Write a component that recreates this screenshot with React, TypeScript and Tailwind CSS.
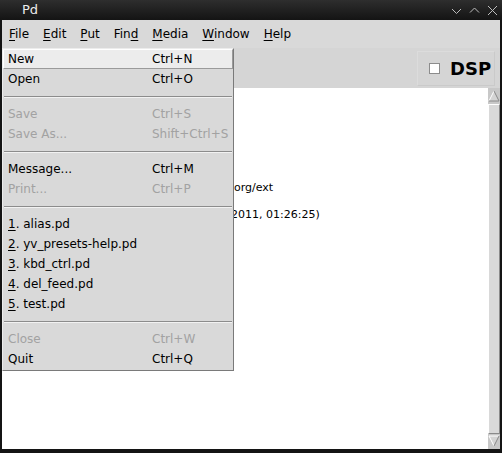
import React from 'react';

type Item =
  | { kind: 'item'; label: React.ReactNode; shortcut?: string; disabled?: boolean; active?: boolean }
  | { kind: 'sep' };

const font = { fontFamily: '"DejaVu Sans", "Liberation Sans", sans-serif' };

const U = ({ children }: { children: React.ReactNode }) => <span className="underline underline-offset-[2px]">{children}</span>;

const menuBar: { pre?: string; u: string; post: string }[] = [
  { u: 'F', post: 'ile' },
  { u: 'E', post: 'dit' },
  { u: 'P', post: 'ut' },
  { pre: 'Fin', u: 'd', post: '' },
  { u: 'M', post: 'edia' },
  { u: 'W', post: 'indow' },
  { u: 'H', post: 'elp' },
];

const fileMenu: Item[] = [
  { kind: 'item', label: 'New', shortcut: 'Ctrl+N', active: true },
  { kind: 'item', label: 'Open', shortcut: 'Ctrl+O' },
  { kind: 'sep' },
  { kind: 'item', label: 'Save', shortcut: 'Ctrl+S', disabled: true },
  { kind: 'item', label: 'Save As...', shortcut: 'Shift+Ctrl+S', disabled: true },
  { kind: 'sep' },
  { kind: 'item', label: 'Message...', shortcut: 'Ctrl+M' },
  { kind: 'item', label: 'Print...', shortcut: 'Ctrl+P', disabled: true },
  { kind: 'sep' },
  { kind: 'item', label: <><U>1</U>. alias.pd</> },
  { kind: 'item', label: <><U>2</U>. yv_presets-help.pd</> },
  { kind: 'item', label: <><U>3</U>. kbd_ctrl.pd</> },
  { kind: 'item', label: <><U>4</U>. del_feed.pd</> },
  { kind: 'item', label: <><U>5</U>. test.pd</> },
  { kind: 'sep' },
  { kind: 'item', label: 'Close', shortcut: 'Ctrl+W', disabled: true },
  { kind: 'item', label: 'Quit', shortcut: 'Ctrl+Q' },
];

const Arrow = ({ up }: { up?: boolean }) => (
  <svg width="12" height="12" viewBox="0 0 12 12" className="block">
    {up ? (
      <>
        <polygon points="6,1 11,11 1,11" fill="#d4d4d4" />
        <polyline points="1,11 6,1" fill="none" stroke="#ffffff" strokeWidth="1" />
        <polyline points="6,1 11,11 1,11" fill="none" stroke="#8a8a8a" strokeWidth="1" />
      </>
    ) : (
      <>
        <polygon points="1,1 11,1 6,11" fill="#d4d4d4" />
        <polyline points="6,11 1,1 11,1" fill="none" stroke="#ffffff" strokeWidth="1" />
        <polyline points="11,1 6,11" fill="none" stroke="#8a8a8a" strokeWidth="1" />
      </>
    )}
  </svg>
);

export default function App() {
  return (
    <div className="relative w-[502px] h-[453px] overflow-hidden bg-[#141414] flex flex-col" style={font}>
      {/* title bar */}
      <div className="h-[20px] flex items-center bg-gradient-to-b from-[#2e2e2e] to-[#141414] text-[#ececec] text-[13px]">
        <span className="ml-[22px]">Pd</span>
        <div className="ml-auto flex items-center gap-[7px] mr-[4px]">
          <svg width="11" height="11" viewBox="0 0 11 11"><polyline points="1,4 5.5,8.5 10,4" fill="none" stroke="#bdbdbd" strokeWidth="1" /></svg>
          <svg width="11" height="11" viewBox="0 0 11 11"><polyline points="1,7.5 5.5,3 10,7.5" fill="none" stroke="#bdbdbd" strokeWidth="1" /></svg>
          <svg width="11" height="11" viewBox="0 0 11 11"><path d="M1 1 L10 10 M10 1 L1 10" fill="none" stroke="#bdbdbd" strokeWidth="1" /></svg>
        </div>
      </div>

      <div className="flex-1 flex flex-col px-[2px] pb-[4px]">
        {/* menu bar */}
        <div className="h-[28px] bg-[#d9d9d9] flex items-center text-[12px] text-black">
          {menuBar.map((m, i) => (
            <span key={i} className="px-[7px]">
              {m.pre}
              <U>{m.u}</U>
              {m.post}
            </span>
          ))}
        </div>

        {/* toolbar */}
        <div className="h-[40px] bg-[#d5d5d5] flex items-center justify-end pr-[5px]">
          <div className="h-[35px] w-[78px] flex items-center border border-[#dcdcdc] border-b-[#cacaca] border-r-[#cacaca]">
            <span className="ml-[11px] w-[11px] h-[11px] bg-white border border-[#8c8c8c]" />
            <span className="ml-[10px] text-[18px] font-bold text-black leading-none mt-[1px]">DSP</span>
          </div>
        </div>

        {/* console (the start of each line lies under the open menu) */}
        <div className="flex-1 flex bg-white">
          <div className="flex-1 text-[11px] text-black leading-[13px] whitespace-nowrap overflow-hidden pt-[93px]">
            <div className="pl-[232px]">org/ext</div>
            <div className="pl-[229px] mt-[14px]">2011, 01:26:25)</div>
          </div>
          <div className="w-[12px] flex flex-col bg-[#c8c8c8] py-[2px]">
            <Arrow up />
            <div className="flex-1 mt-[2px] mb-[1px] bg-[#d9d9d9] border border-t-white border-l-white border-r-[#8a8a8a] border-b-[#8a8a8a]" />
            <Arrow />
          </div>
        </div>
      </div>

      {/* File menu dropdown */}
      <div className="absolute left-[2px] top-[48px] w-[232px] bg-[#d9d9d9] border border-[#ececec] border-r-[#7a7a7a] border-b-[#7a7a7a] text-[12px] pb-[1px]">
        {fileMenu.map((it, i) =>
          it.kind === 'sep' ? (
            <div key={i} className="h-[15px] flex items-center px-[1px]">
              <div className="w-full h-[2px] border-t border-[#8c8c8c] border-b border-b-[#f2f2f2]" />
            </div>
          ) : (
            <div
              key={i}
              className={`h-[20px] flex items-center ${
                it.active ? 'bg-[#ececec] border border-t-white border-l-white border-r-[#9a9a9a] border-b-[#9a9a9a]' : 'border border-transparent'
              } ${it.disabled ? 'text-[#a2a2a2]' : 'text-black'}`}
            >
              <span className="w-[148px] pl-[4px]">{it.label}</span>
              <span>{it.shortcut}</span>
            </div>
          )
        )}
      </div>
    </div>
  );
}
